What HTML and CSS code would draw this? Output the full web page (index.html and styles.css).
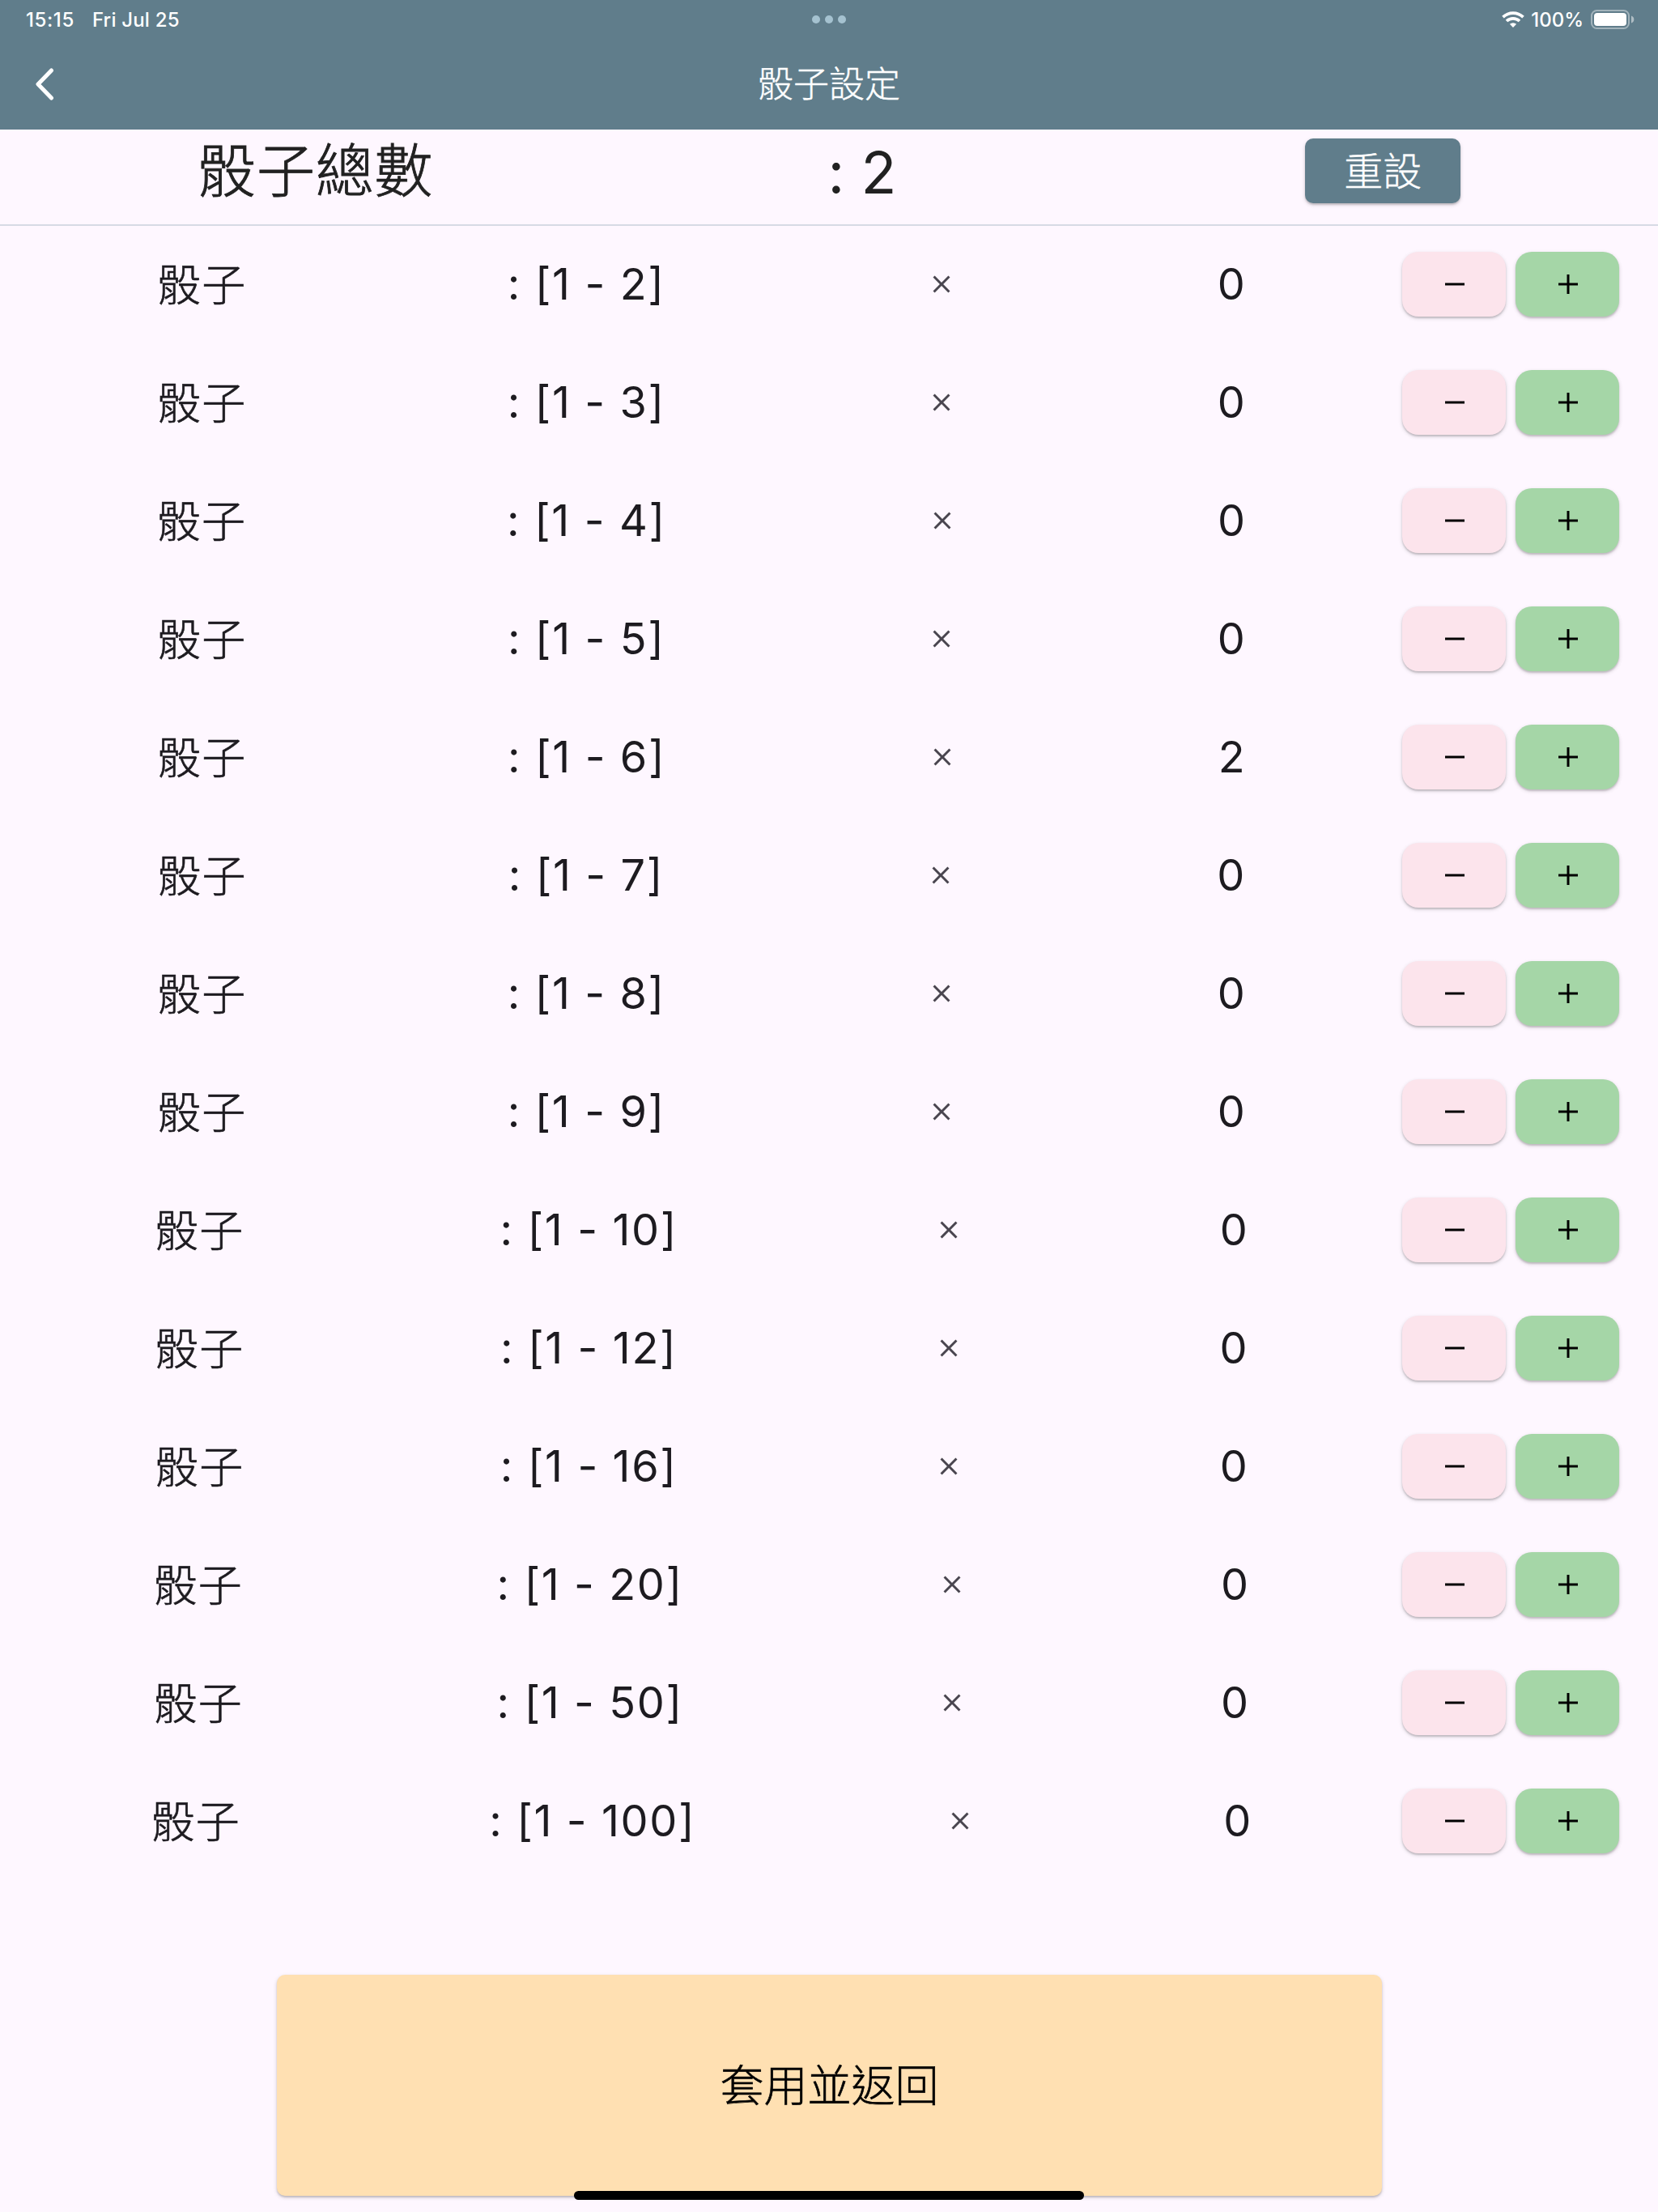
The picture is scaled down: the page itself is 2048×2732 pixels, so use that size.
FILE: index.html
```html
<!DOCTYPE html>
<html lang="zh-Hant">
<head>
<meta charset="utf-8">
<title>骰子設定</title>
<link rel="stylesheet" href="styles.css">
</head>
<body>
<svg width="0" height="0" class="defs">
  <symbol id="times" viewBox="0 0 24 24"><path d="M19 6.41 17.59 5 12 10.59 6.41 5 5 6.41 10.59 12 5 17.59 6.41 19 12 13.41 17.59 19 19 17.59 13.41 12z"/></symbol>
  <symbol id="minus" viewBox="0 0 24 24"><path d="M0 10.5h24v3H0z"/></symbol>
  <symbol id="plus" viewBox="0 0 24 24"><path d="M0 10.5h10.5V0h3v10.5H24v3H13.5V24h-3V13.5H0z"/></symbol>
</svg>
<header class="header">
  <div class="status">
    <div class="status-left"><span class="time">15:15</span><span class="date">Fri Jul 25</span></div>
    <div class="dots"><i></i><i></i><i></i></div>
    <div class="status-right">
      <svg class="wifi" viewBox="0 0 28 20"><path d="M1.5 7.2a18 18 0 0 1 25 0M6 12a11.6 11.6 0 0 1 16 0" fill="none" stroke="#fff" stroke-width="3.7"/><path d="M14 20l-4.1-4.2a6 6 0 0 1 8.2 0z" fill="#fff"/></svg>
      <span class="percent">100%</span>
      <svg class="battery" viewBox="0 0 54 24"><rect x="1" y="1" width="46" height="22" rx="6.5" fill="none" stroke="#fff" stroke-opacity=".42" stroke-width="2"/><rect x="4" y="4" width="40" height="16" rx="4" fill="#fff"/><path d="M50 7.500a4.700 4.700 0 0 1 0 9z" fill="#fff" fill-opacity=".5"/></svg>
    </div>
  </div>
  <div class="appbar">
    <svg class="back" viewBox="0 0 24 40"><path d="M20.500 3 4 20l16.500 17" fill="none" stroke="#fff" stroke-width="5" stroke-linecap="round" stroke-linejoin="round"/></svg>
    <h1 class="title">骰子設定</h1>
  </div>
</header>
<section class="total">
  <span class="total-label">骰子總數</span>
  <span class="total-value">: 2 </span>
  <button class="reset">重設</button>
</section>
<main class="list" id="list"></main>
<footer class="footer">
  <button class="apply">套用並返回</button>
</footer>
<div class="home-bar"></div>
<script src="app.js"></script>
</body>
</html>
```
FILE: styles.css
```css
* { box-sizing: border-box; }
body {
  margin: 0;
  width: 2048px;
  height: 2732px;
  overflow: hidden;
  position: relative;
  display: flex;
  flex-direction: column;
  background: #fef7ff;
  color: #1d1b20;
  font-family: Inter, "Noto Sans CJK TC", sans-serif;
}
.defs { position: absolute; }
button {
  border: 0;
  padding: 0;
  font-family: inherit;
  display: flex;
  align-items: center;
  justify-content: center;
  box-shadow: 0 2px 2px rgba(0,0,0,.14), 0 2px 5px rgba(0,0,0,.16);
}
.header { height: 160px; background: #607d8b; color: #fff; }
.status {
  height: 48px;
  padding: 0 29px;
  display: grid;
  grid-template-columns: 1fr auto 1fr;
  align-items: center;
  font-size: 24px;
  font-weight: 500;
}
.status-left { display: flex; gap: 22px; padding-left: 3px; letter-spacing: .2px; }
.time { letter-spacing: .6px; }
.dots { display: flex; gap: 6px; }
.dots i { width: 10px; height: 10px; border-radius: 50%; background: #a5c2d0; }
.status-right { display: flex; justify-content: flex-end; align-items: center; }
.wifi { width: 28px; height: 20px; margin-right: 8px; }
.percent { margin-right: 9px; }
.battery { width: 54px; height: 24px; }
.appbar {
  height: 112px;
  padding: 0 43px;
  display: grid;
  grid-template-columns: 24px 1fr 24px;
  align-items: center;
}
.back { width: 24px; height: 40px; }
.title { margin: 0; text-align: center; font-size: 44px; line-height: 64px; font-weight: 300; -webkit-text-stroke: .4px; }
.total {
  height: 119px;
  padding: 0 2px 15px 0;
  border-bottom: 2px solid #d6dae4;
  display: flex;
  justify-content: space-around;
  align-items: center;
  color: #212121;
}
.total-label { font-size: 72px; line-height: 100px; font-weight: 300; letter-spacing: .8px; padding-left: 2px; -webkit-text-stroke: .8px; }
.total-value { font-size: 72px; line-height: 100px; white-space: pre; padding: 4px 0 0 3px; font-feature-settings: "calt" 0; }
.reset { width: 192px; height: 80px; padding: 0 0 6px 1px; border-radius: 10px; background: #607d8b; color: #fff; font-size: 48px; font-weight: 300; -webkit-text-stroke: .4px; }
.list { height: 2160px; margin-top: -1px; }
.row { height: 146px; padding: 0 48px 0 32px; display: flex; align-items: center; }
.cells { width: 1668px; display: flex; justify-content: space-around; align-items: center; font-size: 54px; letter-spacing: 1px; line-height: 80px; }
.name { font-weight: 300; width: 110px; padding: 3px 0 0 1px; white-space: nowrap; -webkit-text-stroke: .6px; }
.range { white-space: pre; letter-spacing: 1.6px; padding: 0 1px; }
.times { width: 36px; height: 36px; fill: #49454f; }
.actions { margin-left: 32px; display: flex; gap: 12px; }
.btn { width: 128px; height: 80px; padding-left: 2px; border-radius: 20px; }
.btn svg { width: 24px; height: 24px; }
.btn-minus { background: #fce4ec; }
.btn-plus { background: #a5d6a7; }
.footer { padding-top: 1px; display: flex; justify-content: center; }
.apply { width: 1365px; height: 273px; padding: 0 0 6px 1px; border-radius: 10px; background: #ffe0b2; color: #000; font-size: 54px; font-weight: 300; -webkit-text-stroke: .6px; }
.home-bar { position: absolute; left: 709px; top: 2706px; width: 630px; height: 11px; border-radius: 6px; background: #000; }
```
FILE: app.js
```js
const dice = [[2,0],[3,0],[4,0],[5,0],[6,2],[7,0],[8,0],[9,0],[10,0],[12,0],[16,0],[20,0],[50,0],[100,0]];
document.getElementById('list').innerHTML = dice.map(([max, count]) => `
  <div class="row">
    <div class="cells">
      <span class="name">骰子</span>
      <span class="range">: [1 - ${max}]</span>
      <svg class="times"><use href="#times"/></svg>
      <span class="count">${count}</span>
    </div>
    <div class="actions">
      <button class="btn btn-minus"><svg><use href="#minus"/></svg></button>
      <button class="btn btn-plus"><svg><use href="#plus"/></svg></button>
    </div>
  </div>`).join('');
```
